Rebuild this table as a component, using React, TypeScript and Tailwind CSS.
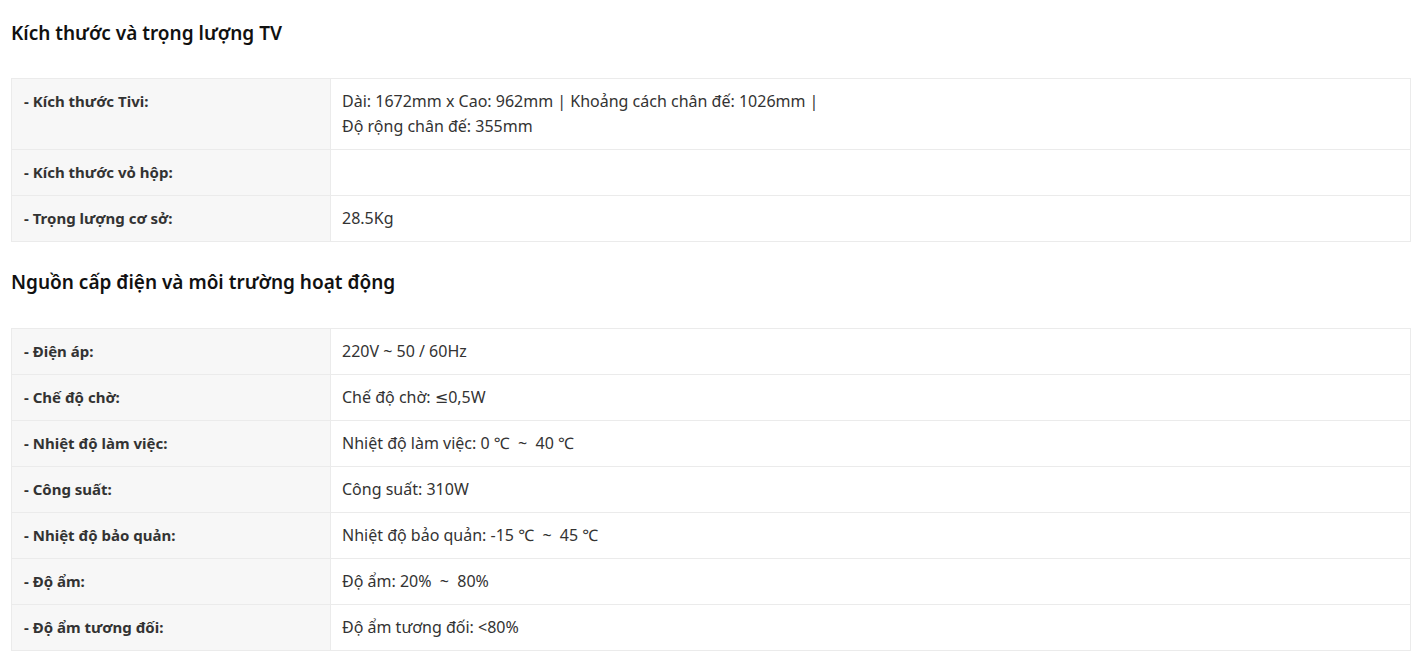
const sizeRows: [string, string[]][] = [
  [
    "- Kích thước Tivi:",
    [
      "Dài: 1672mm x Cao: 962mm | Khoảng cách chân đế: 1026mm |",
      "Độ rộng chân đế: 355mm",
    ],
  ],
  ["- Kích thước vỏ hộp:", []],
  ["- Trọng lượng cơ sở:", ["28.5Kg"]],
];

const powerRows: [string, string[]][] = [
  ["- Điện áp:", ["220V ~ 50 / 60Hz"]],
  ["- Chế độ chờ:", ["Chế độ chờ: ≤0,5W"]],
  ["- Nhiệt độ làm việc:", ["Nhiệt độ làm việc: 0 ℃  ~  40 ℃"]],
  ["- Công suất:", ["Công suất: 310W"]],
  ["- Nhiệt độ bảo quản:", ["Nhiệt độ bảo quản: -15 ℃  ~  45 ℃"]],
  ["- Độ ẩm:", ["Độ ẩm: 20%  ~  80%"]],
  ["- Độ ẩm tương đối:", ["Độ ẩm tương đối: <80%"]],
];

function SpecTable({ rows }: { rows: [string, string[]][] }) {
  return (
    <table className="w-[1400px] border-collapse border border-[#ebebeb] text-[15px] leading-[25px] text-[#333]">
      <tbody>
        {rows.map(([label, value]) => (
          <tr key={label} className="border-b border-[#ebebeb]">
            <td className="w-[319px] bg-[#f7f7f7] border-r border-[#ebebeb] pl-[12px] py-[10px] align-top font-bold whitespace-pre">
              {label}
            </td>
            <td className="pl-[11px] py-[10px] h-[46px] align-top whitespace-pre text-[16px]">
              {value.map((line) => (
                <div key={line}>{line}</div>
              ))}
            </td>
          </tr>
        ))}
      </tbody>
    </table>
  );
}

export default function App() {
  return (
    <div
      className="bg-white w-[1418px] min-h-[663px] pl-[11px]"
      style={{ fontFamily: '"Noto Sans", "DejaVu Sans", sans-serif' }}
    >
      <h2 className="pt-[19px] h-[78px] text-[19px] font-semibold text-[#111]">
        Kích thước và trọng lượng TV
      </h2>
      <SpecTable rows={sizeRows} />
      <h2 className="pt-[26px] h-[86px] text-[19px] font-semibold text-[#111]">
        Nguồn cấp điện và môi trường hoạt động
      </h2>
      <SpecTable rows={powerRows} />
    </div>
  );
}
